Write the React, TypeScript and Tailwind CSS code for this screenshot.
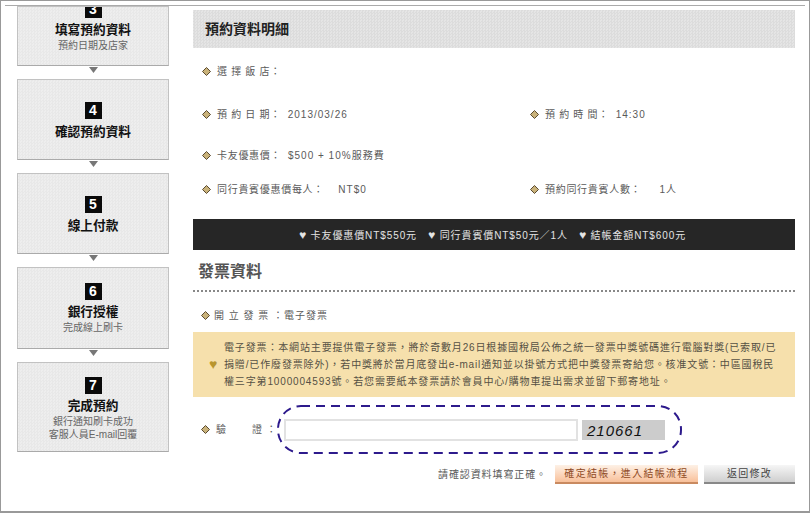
const fontStack = "font-['Liberation_Sans','Noto_Sans_CJK_TC',sans-serif]";

function Diamond() {
  return (
    <svg width="9" height="9" viewBox="0 0 9 9" className="shrink-0">
      <path d="M4.5 0.5 L8.5 4.5 L4.5 8.5 L0.5 4.5 Z" fill="#c9b27a" stroke="#5a4a30" strokeWidth="1" />
    </svg>
  );
}

function Arrow() {
  return (
    <div className="h-[13px] flex justify-center pt-px">
      <svg width="9" height="6" viewBox="0 0 9 6">
        <path d="M0 0 H9 L4.5 6 Z" fill="#777777" />
      </svg>
    </div>
  );
}

function NumberBox({ n }: { n: number }) {
  return (
    <div className="w-[17px] h-[17px] bg-[#0a0a0a] text-white text-[14px] leading-[17px] font-bold text-center mx-auto">
      {n}
    </div>
  );
}

interface StepProps {
  n: number;
  title: string;
  lines?: string[];
  height: string;
  top: string;
  titleGap?: string;
}

const stepBg =
  "bg-[#ebebeb] bg-[repeating-conic-gradient(#e8e8e8_0_25%,#eeeeee_0_50%)] bg-size-[3px_3px]";

function Step({ n, title, lines, height, top, titleGap = "mt-[4px]" }: StepProps) {
  return (
    <div className={`${height} ${top} ${stepBg} border border-[#c2c2c2] border-b-[#aaaaaa] text-center overflow-hidden`}>
      <NumberBox n={n} />
      <div className={`${titleGap} text-[12.7px] leading-[17px] font-bold text-[#111111]`}>{title}</div>
      {lines?.map((l) => (
        <div key={l} className="text-[10px] leading-[13px] text-[#666666]">
          {l}
        </div>
      ))}
    </div>
  );
}

function Field({ label, value }: { label: string; value?: string }) {
  return (
    <div className="h-[18px] flex items-center pl-[9px] text-[10px] tracking-[0.7px] text-[#5a5a5a]">
      <Diamond />
      <span className="ml-[6px] whitespace-pre">{label}</span>
      {value && <span className="ml-[3px] whitespace-pre tracking-[1px]">{value}</span>}
    </div>
  );
}

export default function App() {
  return (
    <div className={`${fontStack} w-[810px] h-[513px] bg-white overflow-hidden border border-[#999999] border-b-2 pt-[4px] px-[4px]`}>
      <div className="h-full border-t border-[#aaaaaa] flex pl-[12px]">
        {/* Steps */}
        <div className="w-[152px] shrink-0">
          <Step n={3} title="填寫預約資料" lines={["預約日期及店家"]} height="h-[60px]" top="pt-0 [&>div:first-child]:-mt-[6px]" />
          <Arrow />
          <Step n={4} title="確認預約資料" height="h-[81px]" top="pt-[22px]" titleGap="mt-[5px]" />
          <Arrow />
          <Step n={5} title="線上付款" height="h-[81px]" top="pt-[22px]" titleGap="mt-[5px]" />
          <Arrow />
          <Step n={6} title="銀行授權" lines={["完成線上刷卡"]} height="h-[82px]" top="pt-[15px]" />
          <Arrow />
          <Step n={7} title="完成預約" lines={["銀行通知刷卡成功", "客服人員E-mail回覆"]} height="h-[90px]" top="pt-[14px]" />
        </div>

        {/* Details */}
        <div className="ml-[24px] w-[602px] shrink-0">
          <div className="mt-[4px] h-[38px] pl-[12px] flex items-center bg-[#e0e0e0] bg-[repeating-conic-gradient(#dcdcdc_0_25%,#e5e5e5_0_50%)] bg-size-[3px_3px] text-[14px] font-bold text-[#222222]">
            預約資料明細
          </div>

          <div className="mt-[14px]">
            <Field label="選 擇 飯 店：" />
          </div>
          <div className="mt-[25px] grid grid-cols-[328px_1fr]">
            <Field label="預 約 日 期：" value=" 2013/03/26" />
            <Field label="預 約 時 間：" value=" 14:30" />
          </div>
          <div className="mt-[23px]">
            <Field label="卡友優惠價：" value=" $500 + 10%服務費" />
          </div>
          <div className="mt-[16px] grid grid-cols-[328px_1fr]">
            <Field label="同行貴賓優惠價每人：" value="   NT$0" />
            <Field label="預約同行貴賓人數：" value="    1人" />
          </div>

          <div className="mt-[21px] h-[31px] bg-[#262626] text-[#e4e4e4] text-[10px] tracking-[0.9px] flex items-center justify-center gap-[11px] pr-[3px]">
            <span><span className="text-[12px]">♥</span> 卡友優惠價NT$550元</span>
            <span><span className="text-[12px]">♥</span> 同行貴賓價NT$50元／1人</span>
            <span><span className="text-[12px]">♥</span> 結帳金額NT$600元</span>
          </div>

          <div className="mt-[10px] h-[24px] pl-[5px] text-[16px] leading-[24px] font-bold text-[#555555]">發票資料</div>
          <div className="mt-[6px] border-t-2 border-dotted border-[#888888]" />

          <div className="mt-[14px] h-[18px] flex items-center pl-[8px] text-[10px] tracking-[1px] text-[#5a5a5a]">
            <Diamond />
            <span className="ml-[4px] whitespace-pre">開 立 發 票 ：電子發票</span>
          </div>

          <div className="mt-[8px] h-[65px] bg-[#f6e0ac] flex items-center pl-[16px] pr-[18px] text-[10px] leading-[17px] tracking-[0.85px] text-[#555044]">
            <span className="text-[#b8952e] text-[14px] w-[15px] shrink-0">♥</span>
            <p>
              電子發票：本網站主要提供電子發票，將於奇數月26日根據國稅局公佈之統一發票中獎號碼進行電腦對獎(已索取/已捐贈/已作廢發票除外)，若中獎將於當月底發出e-mail通知並以掛號方式把中獎發票寄給您。核准文號：中區國稅民權三字第1000004593號。若您需要紙本發票請於會員中心/購物車提出需求並留下郵寄地址。
            </p>
          </div>

          <div className="mt-[8px] h-[49px] flex items-center">
            <div className="w-[84px] flex items-center pl-[8px] text-[10px] text-[#5a5a5a] tracking-[0.7px] shrink-0">
              <Diamond />
              <span className="ml-[6px] w-[62px] flex justify-between whitespace-pre">
                <span>驗</span>
                <span>證 ：</span>
              </span>
            </div>
            <div className="relative h-[49px] w-[405px] flex items-center pl-[7px]">
              <svg width="405" height="49" className="absolute inset-0" fill="none">
                <rect x="1" y="1" width="403" height="47" rx="23" stroke="#2d1a8c" strokeWidth="2" strokeDasharray="9 6" />
              </svg>
              <input className="w-[294px] h-[22px] bg-white border-2 border-[#e2e2e2] outline-none" />
              <div className="ml-[4px] w-[83px] h-[20px] bg-[#cccccc] pl-[5px] font-['Liberation_Sans'] italic text-[15px] leading-[21px] tracking-[1px] text-[#111111]">
                210661
              </div>
            </div>
          </div>

          <div className="mt-[11px] flex items-center justify-end text-[10px] tracking-[0.9px]">
            <span className="text-[#5a5a5a] mr-[8px]">請確認資料填寫正確。</span>
            <button className="w-[143px] h-[19px] bg-linear-to-b from-[#fdf1e6] to-[#f8c09a] border-b-2 border-[#c98a60] text-[#8f4a24] tracking-[1.3px]">
              確定結帳，進入結帳流程
            </button>
            <button className="ml-[6px] w-[91px] h-[19px] bg-linear-to-b from-[#f6f6f6] to-[#cfcfcf] border-b-2 border-[#888888] text-[#444444] tracking-[1.3px]">
              返回修改
            </button>
          </div>
        </div>
      </div>
    </div>
  );
}
